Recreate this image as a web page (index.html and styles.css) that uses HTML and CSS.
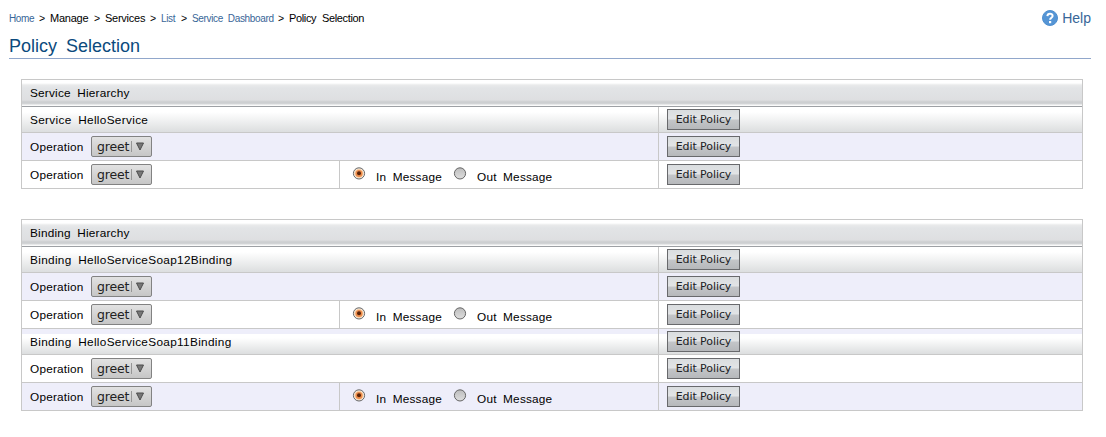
FILE: index.html
```
<!DOCTYPE html>
<html lang="en">
<head>
<meta charset="utf-8">
<title>Policy Selection</title>
<link rel="stylesheet" href="styles.css">
</head>
<body>
<header class="top">
  <nav class="crumbs">
    <a class="c-home">Home</a><i>&gt;</i><span class="c-manage">Manage</span><i>&gt;</i><span class="c-services">Services</span><i>&gt;</i><a class="c-list">List</a><i>&gt;</i><a class="c-dash">Service Dashboard</a><i>&gt;</i><span class="c-current">Policy Selection</span>
  </nav>
  <a class="help">
    <svg width="16" height="16" viewBox="0 0 16 16"><circle cx="8" cy="8" r="7.5" fill="#5595d5" stroke="#4f8fcf"/><path d="M5.4 6.1C5.5 2.8 10.7 2.9 10.6 6C10.6 7.8 8.1 7.8 8.1 9.8" fill="none" stroke="#fff" stroke-width="2"/><rect x="7" y="11" width="2.2" height="2.2" fill="#fff"/></svg>
    <span>Help</span>
  </a>
</header>
<h1><span>Policy Selection</span></h1>
<main id="tables"></main>
<script src="app.js"></script>
</body>
</html>
```
FILE: styles.css
```
body { margin: 0; background: #fff; color: #000; font-family: "Liberation Sans", Arial, sans-serif; }
.top { display: flex; justify-content: space-between; height: 36px; padding: 0 15px 0 9px; box-sizing: border-box; }
.crumbs { display: flex; padding-top: 11px; height: 14px; line-height: 14px; font-size: 11px; white-space: nowrap; }
.crumbs a { font-size: 10px; letter-spacing: -.35px; line-height: 15px; color: #386698; }
.crumbs i { width: 16px; text-align: center; font-style: normal; font-size: 10.5px; }
.c-home { width: 25px; }
.c-manage { width: 39px; }
.c-services { width: 40px; }
.c-list { width: 15px; }
.c-dash { width: 81px; word-spacing: 2.5px; }
.c-current { word-spacing: 3px; }
.crumbs span { letter-spacing: -.25px; }
.crumbs .c-current { letter-spacing: -.35px; }
.help { display: flex; gap: 4px; padding-top: 10px; font-size: 14px; line-height: 16px; color: #386698; }
h1 { margin: 0 15px 20px 9px; height: 22px; border-bottom: 1px solid #91a7cb; font-size: 18px; line-height: 20px; font-weight: normal; color: #0b4a7d; word-spacing: 4px; }
.policy { margin: 0 23px 30px 21px; border: 1px solid #c8c8c8; border-bottom: 0; font-size: 11.8px; }
.title { height: 26px; padding-left: 8px; line-height: 27px; border-bottom: 1px solid #9da0a4; background: linear-gradient(#fff 0 3px, #e9eaeb 5px, #e2e4e6 8px, #dedfe1 20px, #cbcdcf 22px, #d3d5d7 24px, #fafafa 25px); }
.row { display: grid; grid-template-columns: 636px 1fr; grid-template-rows: 100%; height: 27px; border-bottom: 1px solid #c8c8c8; }
.row.message { grid-template-columns: 317px 319px 1fr; }
.row.shaded { background: #eeeefa; }
.row.group { height: 25px; background: linear-gradient(#fff 0 5px, #dcdedf 25px); }
.row.second { background: linear-gradient(#eeeefa 0 5px, #fff 5px 9px, #dcdedf 25px); }
.label { display: flex; align-items: center; padding-left: 8px; }
.action { display: flex; align-items: center; padding-left: 8px; border-left: 1px solid #c8c8c8; }
.text { letter-spacing: .2px; word-spacing: 3px; }
.group .text { letter-spacing: .32px; }
.label .text { width: 61px; white-space: nowrap; }
.edit { width: 73px; height: 21px; box-sizing: border-box; padding: 0; border: 1px solid #68696c; border-radius: 0; background: linear-gradient(#dadddf 0, #e2e4e6 9px, #c3c5c8 10px, #b6b8bb 100%); font: 11px/17px "DejaVu Sans", sans-serif; letter-spacing: -.08px; color: #202124; }
.select { display: flex; width: 61px; height: 21px; box-sizing: border-box; align-items: center; border: 1px solid #828282; border-radius: 2px; background: linear-gradient(#e2e2e2, #c6c6c6); font: 12.5px/18px "DejaVu Sans", sans-serif; letter-spacing: -.2px; color: #222; }
.select span { width: 35px; padding-left: 5px; box-sizing: border-box; }
.select svg { display: block; }
.options { display: flex; padding-left: 12px; border-left: 1px solid #c8c8c8; }
.radio { margin-top: 5px; width: 14px; height: 14px; }
.options .text { line-height: 32px; white-space: nowrap; }
.in-text { margin-left: 10px; width: 77px; }
.out-text { margin-left: 10px; }
```
FILE: app.js
```
const edit = '<div class="action"><button class="edit">Edit Policy</button></div>';
const radio = on => `<svg class="radio" viewBox="0 0 14 14"><defs><linearGradient id="rg" x2="0" y2="1"><stop stop-color="#bdbdbd"/><stop offset="1" stop-color="#dedede"/></linearGradient></defs><circle cx="7" cy="7.4" r="5.6" fill="${on ? '#f5eee6' : 'url(#rg)'}" stroke="#656565"/>${on ? '<circle cx="7" cy="7.4" r="4.5" fill="#f9cfa5"/><circle cx="7" cy="7.4" r="3.5" fill="#ec8b4a"/><circle cx="7" cy="7.2" r="2" fill="#5a2408"/>' : ''}</svg>`;
const select = '<div class="select"><span>greet</span><svg width="22" height="15"><path d="M4.5 2V13" stroke="#969696"/><path d="M9.5 4H16.5L13 11Z" fill="#777" stroke="#4d4d4d"/></svg></div>';
const group = (name, second = '') => `<div class="row group ${second}"><div class="label"><span class="text">${name}</span></div>${edit}</div>`;
const operation = shade => `<div class="row ${shade}"><div class="label"><span class="text">Operation</span>${select}</div>${edit}</div>`;
const message = shade => `<div class="row message ${shade}"><div class="label"><span class="text">Operation</span>${select}</div><div class="options">${radio(true)}<span class="text in-text">In Message</span>${radio(false)}<span class="text out-text">Out Message</span></div>${edit}</div>`;
const table = (title, rows) => `<section class="policy"><div class="title"><span class="text">${title}</span></div>${rows}</section>`;
document.getElementById('tables').innerHTML =
  table('Service Hierarchy', group('Service HelloService') + operation('shaded') + message('')) +
  table('Binding Hierarchy', group('Binding HelloServiceSoap12Binding') + operation('shaded') + message('') +
    group('Binding HelloServiceSoap11Binding', 'second') + operation('') + message('shaded'));
```
